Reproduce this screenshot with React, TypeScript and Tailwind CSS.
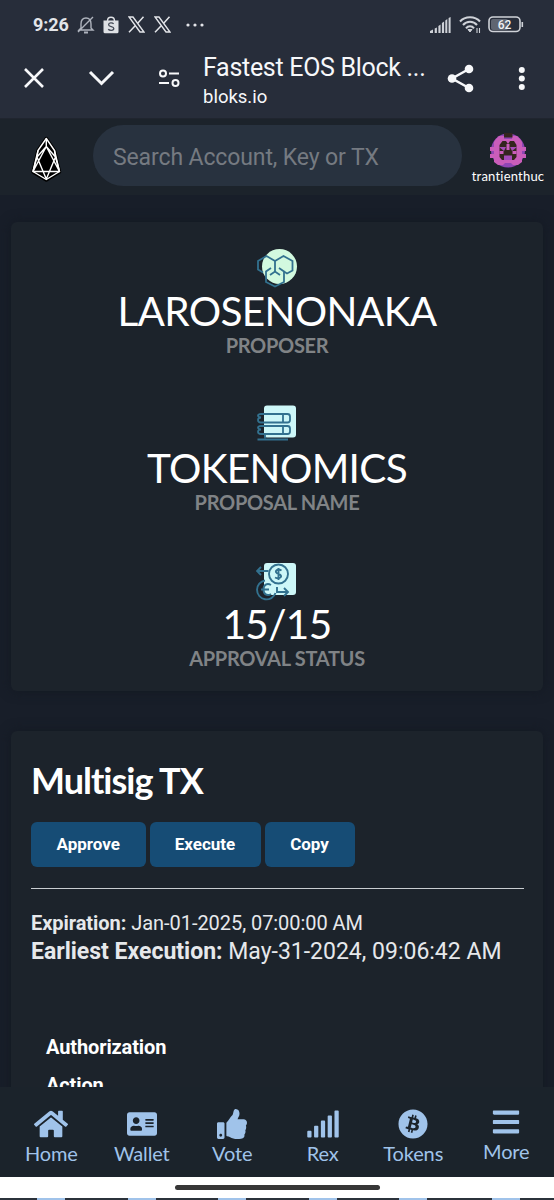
import { FaAddressCard, FaBars, FaBitcoin, FaHome, FaSignal, FaThumbsUp } from "react-icons/fa"
import type { ReactNode } from "react"

const XLogo = () => (
  <svg width="17" height="17" viewBox="0 0 17 17" fill="none" stroke="#e3e5e9">
    <path d="M1 1h4l11 15h-4z" strokeWidth="1.4" />
    <path d="M15.5.8 9.7 7.3M7.2 9.8 1 16.2" strokeWidth="1.5" />
  </svg>
)

function StatusBar() {
  return (
    <div className="flex h-12 shrink-0 items-center pl-[33px] pr-[30px] pt-px text-[#e3e5e9]">
      <span className="w-9 whitespace-nowrap text-[18px] font-bold leading-none tracking-[-0.1px]">9:26</span>
      <svg className="ml-2" width="18" height="18" viewBox="0 0 18 18" fill="none" stroke="#aeb3bd" strokeWidth="1.4">
        <path d="M4 14V8c0-4 2-6 5-6s5 2 5 6v4l2 2H2l2-2M16 1 1 16" />
        <path d="M7 16.5h4" strokeWidth="2" />
      </svg>
      <svg className="ml-[8px]" width="16" height="18" viewBox="0 0 16 18">
        <path d="M4.5 5c0-5 7-5 7 0" fill="none" stroke="#dfe1e5" strokeWidth="1.4" />
        <path d="M.5 4.5h15v11.2a1.5 1.5 0 0 1-1.5 1.5H2a1.5 1.5 0 0 1-1.5-1.5z" fill="#dfe1e5" />
        <path d="M10.6 7.8C9.5 6.5 5.6 6.4 5.6 8.7c0 2.6 5.2 1.3 5.2 3.8 0 2.3-4.2 2.2-5.6.8" fill="none" stroke="#444a57" strokeWidth="1.3" />
      </svg>
      <div className="ml-[9px] flex gap-[9px]">
        <XLogo />
        <XLogo />
      </div>
      <svg className="ml-[15px]" width="18" height="4" fill="#e3e5e9">
        <circle cx="2" cy="2" r="1.6" />
        <circle cx="9" cy="2" r="1.6" />
        <circle cx="16" cy="2" r="1.6" />
      </svg>
      <svg className="ml-auto" width="21" height="16" viewBox="0 0 21 16" fill="#cfd2d8">
        <path d="M0 16v-2l3-1.5V16zM4.7 16v-4.500l2.200-1V16zM8.400 16V9l2.200-1.500V16zM11.900 16V6l2.200-1.500V16zM15.300 16V3.500L17.300 2v14zM18.600 16V1l2-1v16z" />
      </svg>
      <svg className="ml-[8px]" width="22" height="18" viewBox="0 0 22 18" fill="none" stroke="#cfd2d8" strokeWidth="2">
        <path d="M1 5.500C6-.2 16-.2 21 5.500M4 9c3.700-4.500 10.300-4.500 14 0M7 12.300c2-2.700 6-2.700 8 0" />
        <path d="m9 13.500 2 2.500 2-2.500z" fill="#cfd2d8" strokeWidth="1" />
        <path d="M18 12v5M20.500 12v5" strokeWidth="1.100" />
      </svg>
      <svg className="ml-[7px]" width="36" height="17" viewBox="0 0 36 17">
        <rect x="3" y="3" width="17" height="11" rx="2" fill="#5f6571" />
        <rect x="1" y="1" width="31" height="14.500" rx="4" fill="none" stroke="#cfd2d8" strokeWidth="1.600" />
        <path d="M34.300 6v5" stroke="#cfd2d8" strokeWidth="1.600" />
        <text x="16.500" y="12.500" textAnchor="middle" fontSize="12" fontWeight="500" fill="#f1f2f4">62</text>
      </svg>
    </div>
  )
}

function BrowserBar() {
  return (
    <div className="flex h-[71px] shrink-0 border-b border-[#20252f] pl-6 text-[#f7f8fa]">
      <svg className="mt-5" width="20" height="21" stroke="currentColor" strokeWidth="2.6">
        <path d="m1 1 18 18M19 1 1 19" />
      </svg>
      <svg className="ml-[44px] mt-[22px]" width="27" height="18" fill="none" stroke="currentColor" strokeWidth="3">
        <path d="m2 2 11.500 11.500L25 2" />
      </svg>
      <svg className="ml-[43px] mt-[21px]" width="22" height="19" fill="none" stroke="currentColor" strokeWidth="2">
        <circle cx="5" cy="4.500" r="3" />
        <circle cx="17.500" cy="14" r="3" />
        <path d="M11 4.500h10M1 14h10" />
      </svg>
      <div className="ml-[23px] w-[236px] whitespace-nowrap">
        <div className="mt-[5px] text-[25px] leading-[30px] tracking-[-0.300px]">Fastest EOS Block ...</div>
        <div className="mt-[4px] text-[18.500px] leading-[20px]">bloks.io</div>
      </div>
      <svg className="ml-[8px] mt-[16px]" width="28" height="29" fill="currentColor">
        <path d="M22 5 5 14.500 22 24" fill="none" stroke="currentColor" strokeWidth="2.500" />
        <circle cx="22" cy="5" r="4.300" />
        <circle cx="5" cy="14.500" r="4.300" />
        <circle cx="22" cy="24" r="4.300" />
      </svg>
      <svg className="ml-[43px] mt-[18px]" width="8" height="26" fill="currentColor">
        <circle cx="3.800" cy="4" r="3" />
        <circle cx="3.800" cy="12.500" r="3" />
        <circle cx="3.800" cy="21" r="3" />
      </svg>
    </div>
  )
}

function SiteHeader() {
  return (
    <header className="flex h-[76px] shrink-0 bg-[#1c232b]">
      <svg className="ml-[30px] mt-[16px]" width="33" height="47" viewBox="0 0 33 47" fill="#000" strokeLinejoin="round">
        <path d="M16.300 3.500 8 15.500 3 37l13.300 8L29.500 37l-5-21.500z" stroke="#000" strokeWidth="3.500" />
        <g fill="none" stroke="#fff" strokeWidth="1.400">
          <path d="M16.300 3.500 8 15.500 3 36.500l13.300 8 13.200-8-5-21z" />
          <path d="M16.300 3.500v8L7 22l9.300 22 9.200-22-9.200-10.500M8 15.500 7 22 3 36.500h26.500L25.500 22l-1-6.500M3 36.500l13.300-25 13.200 25" />
        </g>
      </svg>
      <div className="ml-[30px] mt-[6px] flex h-[61px] w-[369px] items-center rounded-full bg-[#28323f] pl-[20px] pt-[6px] text-[23px] tracking-[-0.120px] text-[#757a81]">
        Search Account, Key or TX
      </div>
      <div className="ml-[6px] mt-[14px] flex w-[80px] flex-col items-center font-['Lato',sans-serif] text-white">
        <svg width="36" height="36" viewBox="0 0 36 36">
          <circle cx="18" cy="17.500" r="17" fill="#9046b4" />
          <path d="M9 3h5v3h8V3h5l3 3 2 3v5h4v4h-4v3h4v4h-4v4l-4 3h-5l-2-2h-6l-2 2H8l-4-3v-4H0v-4h4v-3H0v-4h4V9l2-3z" fill="#ca5dba" />
          <path d="M14 0h8.500v4.500H14zM9.500 12l3-4h3.500l2 3 2-3h4l2.500 4v12l-2.500 3H12l-2.500-3z" fill="#34251e" />
          <path d="M16.500 11h3v6h-3zM9.500 18h4v3h-4zM22.500 18h4v3h-4z" fill="#ca5dba" />
          <path d="M9 14h7l-2 4zM20 14h7l-5 4zM14 22.500h8V27h-8z" fill="#a44cb8" />
        </svg>
        <span className="text-[13px] leading-[14px] tracking-[0.200px]">trantienthuc</span>
      </div>
    </header>
  )
}

const ProposerIcon = () => (
  <svg width="42" height="40" viewBox="0 0 42 40">
    <circle cx="23.500" cy="18.500" r="17.500" fill="#d2f9df" />
    <g fill="none" stroke="#32718f" strokeWidth="1.800">
      <path d="M7 24.500 2 21.500V13l8.500-5 8.500 5v10.500M19 13l8.500-5 9 5v9.500L31 25.500l-3-2" />
      <path d="m15 20-5 3.500V34l9 4.500 9-4.500V23.500L23 20M14 27l5-3.500 5 3.500" />
    </g>
  </svg>
)

const NameIcon = () => (
  <svg width="42" height="40" viewBox="0 1.500 42 40">
    <rect x="8" y="2" width="32" height="32" rx="3" fill="#cdf7f8" />
    <g fill="none" stroke="#32718f" strokeWidth="1.800">
      <path d="M5 10.500h26.500q2.500 0 2.500 2.500v3.500q0 2.500-2.500 2.500H5M5 22.500h26.500q2.500 0 2.500 2.500v3q0 2.500-2.500 2.500H5M27 10.500V19M27 22.500v8M9 35v-4" />
      <path d="M5 10.500c-4 0-4 3 0 3.500-4 0-4 5 0 5M5 22.500c-4 0-4 3 0 3.500-4 0-4 4.500 0 4.500M1.500 36h30.500" />
    </g>
  </svg>
)

const StatusIcon = () => (
  <svg width="42" height="40" viewBox="0 1 42 40">
    <rect x="8" y="3" width="32" height="32" rx="3" fill="#cdf7f8" />
    <g fill="none" stroke="#32718f" strokeWidth="1.900">
      <circle cx="22.500" cy="14" r="9.500" />
      <path d="M25.500 10.500c-5-3-8 2-3 3.500s2 6-3.500 3.500M22.500 8v12M12.500 11H1m4-4-4 4 4 4" />
      <path d="M9 20.500A9.500 9.500 0 1 0 19.500 33M15 25c-4-2.500-7.500 0-7.500 4.500S11 36.500 15 34M5 29.500h8M21 27v5h11m-4-4 4 4-4 4" />
    </g>
  </svg>
)

function Stat({ icon, value, label }: { icon: ReactNode; value: string; label: string }) {
  return (
    <div className="flex h-[156.500px] flex-col items-center font-['Lato',sans-serif]">
      {icon}
      <div className="mt-[1px] text-[40.500px] leading-[44px] tracking-[-0.650px] text-white">{value}</div>
      <div className="mt-px text-[20px] font-bold leading-[22px] tracking-[-0.300px] text-[#808386]">{label}</div>
    </div>
  )
}

const navItems = [
  { icon: <FaHome size={34} />, label: "Home" },
  { icon: <FaAddressCard size={30} />, label: "Wallet" },
  { icon: <FaThumbsUp size={30} />, label: "Vote" },
  { icon: <FaSignal size={34} />, label: "Rex" },
  { icon: <FaBitcoin size={30} />, label: "Tokens" },
  { icon: <FaBars size={30} />, label: "More" },
]

function BottomNav() {
  return (
    <nav className="flex h-[90px] shrink-0 bg-[#1b232b] pl-[6px] font-['Lato',sans-serif] text-[#a0c3ea]">
      {navItems.map((item) => (
        <div key={item.label} className="flex w-[90.500px] flex-col items-center last:w-auto last:flex-1 last:-mt-[2px]">
          <div className="mt-[19px] flex h-[35px] items-center">{item.icon}</div>
          <div className="text-[20px] leading-[25px] tracking-[-0.150px]">{item.label}</div>
        </div>
      ))}
    </nav>
  )
}

export default function App() {
  return (
    <div className="flex h-[1200px] w-[554px] flex-col overflow-hidden bg-[#272d3a] font-['Roboto',sans-serif]">
      <StatusBar />
      <BrowserBar />
      <SiteHeader />

      <main className="flex min-h-0 flex-1 flex-col overflow-hidden bg-[#181e29] px-[11px] pt-[27px]">
        <section className="h-[469px] shrink-0 rounded-md bg-[#1c232b] pt-[26px] shadow-[0_0_12px_#131922]">
          <Stat icon={<ProposerIcon />} value="LAROSENONAKA" label="PROPOSER" />
          <Stat icon={<NameIcon />} value="TOKENOMICS" label="PROPOSAL NAME" />
          <Stat icon={<StatusIcon />} value="15/15" label="APPROVAL STATUS" />
        </section>

        <section className="mt-[40px] h-[469px] shrink-0 rounded-md bg-[#1c232b] pl-5 pr-[19px] pt-[28px] text-[#e6e8eb] shadow-[0_0_12px_#131922]">
          <h1 className="font-['Lato',sans-serif] text-[36px] font-bold leading-[42px] tracking-[-1px] text-white">Multisig TX</h1>
          <div className="mt-[21px] flex gap-1 text-[17px] font-bold text-white [text-shadow:1px_1px_2px_#0b1a26]">
            <button className="h-[45px] w-[114.500px] rounded-md bg-[#164c75]">Approve</button>
            <button className="h-[45px] w-[111px] rounded-md bg-[#164c75]">Execute</button>
            <button className="h-[45px] w-[90px] rounded-md bg-[#164c75]">Copy</button>
          </div>
          <hr className="mt-[21px] border-[#c9cdd1]" />
          <p className="mt-[20px] whitespace-nowrap text-[20px] leading-[28px] tracking-[-0.050px]"><b>Expiration:</b> Jan-01-2025, 07:00:00 AM</p>
          <p className="whitespace-nowrap text-[23px] leading-[30px]"><b>Earliest Execution:</b> May-31-2024, 09:06:42 AM</p>
          <div className="ml-[15px] mt-[61px] text-[20px] font-bold leading-[38px] tracking-[-0.120px] text-white">
            <div>Authorization</div>
            <div>Action</div>
          </div>
        </section>
      </main>

      <BottomNav />
      {/* gesture bar, then the sliver of the nav that shows under it */}
      <div className="flex h-[21px] shrink-0 items-center justify-center bg-white">
        <div className="h-[5px] w-[205px] rounded-full bg-[#373737]" />
      </div>
      <div className="flex h-[2px] shrink-0 overflow-hidden bg-[#2b323b] pl-[6px]">
        {navItems.map((item) => (
          <div key={item.label} className="flex w-[90.500px] justify-center last:w-auto last:flex-1">
            <div className="h-[2px] w-[28px] bg-[#a0c3ea]" />
          </div>
        ))}
      </div>
    </div>
  )
}
